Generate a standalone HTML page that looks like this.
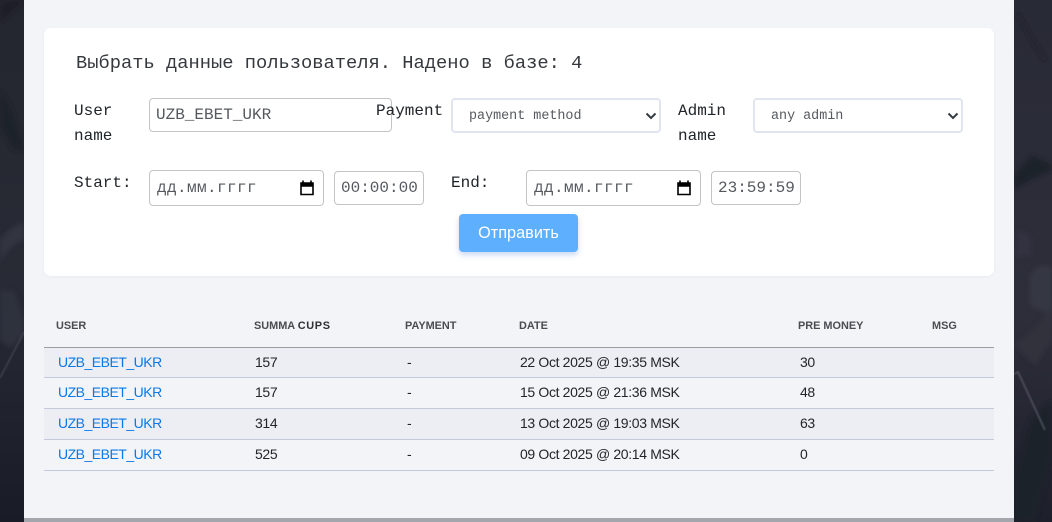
<!DOCTYPE html>
<html lang="ru"><head><meta charset="utf-8"><title>Users</title>
<style>
*{box-sizing:border-box}
html,body{margin:0;padding:0}
body{width:1052px;height:522px;overflow:hidden;position:relative;background:#23252f;font-family:"Liberation Sans",sans-serif}
.bg{position:absolute;left:0;top:0}
.main{position:absolute;left:24px;top:0;width:990px;height:522px;background:#f3f4f8}
.foot{position:absolute;left:24px;top:518px;width:990px;height:4px;background:#a3a6ad}
.card{position:absolute;left:44px;top:28px;width:950px;height:248px;background:#fff;border-radius:7px;box-shadow:0 1px 3px rgba(60,70,100,.05)}
.m{position:absolute;font-family:"Liberation Mono","Noto Sans CJK SC",monospace;white-space:nowrap}
.h{left:76px;top:52px;font-size:18.75px;line-height:22px;color:#35383d}
.l{font-size:16px;line-height:24.5px;color:#212529;letter-spacing:0}
.box{position:absolute;background:#fff;border:1px solid #c4c4c4;border-radius:4px;font-family:"Liberation Mono","Noto Sans CJK SC",monospace;color:#55595e;white-space:nowrap}
.sel{position:absolute;top:98px;height:35px;background:#fff;border:2px solid #e1e5ef;border-radius:4px;font-family:"Liberation Mono",monospace;font-size:13.4px;line-height:33px;color:#55595e;padding-left:16px}
.sel svg{position:absolute;right:2px;top:11px}
.cal{position:absolute;top:8px}
.btn{position:absolute;left:459px;top:214px;width:119px;height:38px;background:#5eb0ff;border:0;border-radius:4px;color:#fff;font-family:"Liberation Sans","Noto Sans CJK SC",sans-serif;font-size:16.3px;line-height:38px;text-align:center;padding:0;box-shadow:0 3px 6px rgba(80,130,220,.3)}
.th{position:absolute;top:320px;font-size:10.9px;line-height:13px;font-weight:bold;color:#4a4c52;white-space:nowrap}
.row{position:absolute;left:44px;width:950px;border-bottom:1px solid #c3c9da}
.td{position:absolute;font-size:14px;line-height:16px;color:#212529;white-space:nowrap;letter-spacing:-.35px}
.a{color:#0a78e6;left:58px;text-decoration:none;letter-spacing:-.5px}
.dt{letter-spacing:.4px}
</style></head><body>
<svg class="bg" width="1052" height="522" viewBox="0 0 1052 522" fill="none">
<defs><linearGradient id="g1" x1="0" y1="0" x2="0" y2="1"><stop offset="0" stop-color="#24262f"/><stop offset=".55" stop-color="#282a35"/><stop offset="1" stop-color="#191b27"/></linearGradient>
<linearGradient id="g2" x1="0" y1="0" x2="0" y2="1"><stop offset="0" stop-color="#282a35"/><stop offset=".6" stop-color="#2d2e3a"/><stop offset="1" stop-color="#1d1f2b"/></linearGradient>
<filter id="b" x="-10%" y="-10%" width="120%" height="120%"><feGaussianBlur stdDeviation="2.500"/></filter>
<filter id="b2" x="-10%" y="-10%" width="120%" height="120%"><feGaussianBlur stdDeviation=".7"/></filter></defs>
<rect x="0" y="0" width="24" height="522" fill="url(#g1)"/>
<rect x="1014" y="0" width="38" height="522" fill="url(#g2)"/>
<g filter="url(#b)">
<path d="M0 5L14 0L24 0L0 22Z" fill="#1a1b25"/>
<path d="M0 90L12 110L24 150L14 150L0 125Z" fill="#1e202b"/>
<path d="M0 240Q12 225 24 222L24 240Q10 245 0 262Z" fill="#32343f"/>
<path d="M0 290L15 292L24 320L24 335L10 348L0 340Z" fill="#2f313c"/>
<path d="M1014 175L1032 155L1052 165L1052 170L1030 180L1014 190Z" fill="#1f212b"/>
<path d="M1030 275Q1040 262 1052 268L1052 315L1030 305Z" fill="#363743"/>
<path d="M1018 230L1030 235L1032 255L1014 258Z" fill="#323340"/>
<path d="M1014 345Q1035 330 1052 308L1052 340L1035 365Z" fill="#30313d"/>
<path d="M1018 15Q1035 45 1045 60" stroke="#1d1f29" stroke-width="2"/>
<path d="M1030 420L1052 400L1052 460L1035 522L1014 522L1014 480Z" fill="#1e202b"/>
</g>
<g filter="url(#b2)">
<path d="M0 378L24 332" stroke="#474955" stroke-width="1.200"/>
<path d="M1014 374L1018 372L1045 430" stroke="#505260" stroke-width="1.500"/>
</g>
</svg>
<div class="main"></div>
<div class="foot"></div>
<div class="card"></div>
<div class="m h">Выбрать данные пользователя. Надено в базе: 4</div>

<div class="m l" style="left:74px;top:99px">User<br>name</div>
<div class="box" style="left:149px;top:98px;width:243px;height:34px;font-size:16px;line-height:33px;padding-left:6px">UZB_EBET_UKR</div>
<div class="m l" style="left:376px;top:99px">Payment</div>
<div class="sel" style="left:451px;width:210px">payment method<svg width="12" height="10" viewBox="0 0 12 10"><path d="M1.500 2.500L6 7L10.500 2.500" stroke="#343a40" stroke-width="2" fill="none"/></svg></div>
<div class="m l" style="left:678px;top:99px">Admin<br>name</div>
<div class="sel" style="left:753px;width:210px">any admin<svg width="12" height="10" viewBox="0 0 12 10"><path d="M1.500 2.500L6 7L10.500 2.500" stroke="#343a40" stroke-width="2" fill="none"/></svg></div>

<div class="m l" style="left:74px;top:171px">Start:</div>
<div class="box" style="left:149px;top:170px;width:175px;height:36px;font-size:16px;line-height:35px;padding-left:7px"><span class="dt">дд.мм.гггг</span><svg class="cal" style="left:150px" width="14" height="20" viewBox="0 0 14 20"><path d="M3 1.500V4M11 1.500V4M1 4H13V15.500H1ZM1 7H13" stroke="#000" stroke-width="1.600" fill="none"/><rect x="1" y="4" width="12" height="3" fill="#000"/></svg></div>
<div class="box" style="left:334px;top:171px;width:90px;height:34px;font-size:16px;line-height:33px;padding-left:6px">00:00:00</div>
<div class="m l" style="left:451px;top:171px">End:</div>
<div class="box" style="left:526px;top:170px;width:175px;height:36px;font-size:16px;line-height:35px;padding-left:7px"><span class="dt">дд.мм.гггг</span><svg class="cal" style="left:150px" width="14" height="20" viewBox="0 0 14 20"><path d="M3 1.500V4M11 1.500V4M1 4H13V15.500H1ZM1 7H13" stroke="#000" stroke-width="1.600" fill="none"/><rect x="1" y="4" width="12" height="3" fill="#000"/></svg></div>
<div class="box" style="left:711px;top:171px;width:90px;height:34px;font-size:16px;line-height:33px;padding-left:6px">23:59:59</div>
<button class="btn">Отправить</button>

<div class="th" style="left:56px">USER</div>
<div class="th" style="left:254px">SUMMA <span style="color:#2f3136;letter-spacing:.65px">CUPS</span></div>
<div class="th" style="left:405px">PAYMENT</div>
<div class="th" style="left:519px">DATE</div>
<div class="th" style="left:798px">PRE MONEY</div>
<div class="th" style="left:932px">MSG</div>

<div class="row" style="top:347px;height:31px;background:#eceef3;border-top:1px solid #9c9da3"></div>
<div class="row" style="top:378px;height:31px"></div>
<div class="row" style="top:409px;height:31px;background:#eceef3"></div>
<div class="row" style="top:440px;height:31px"></div>

<a class="td a" style="top:354px">UZB_EBET_UKR</a><div class="td" style="left:255px;top:354px">157</div><div class="td" style="left:407px;top:354px">-</div><div class="td" style="left:520px;top:354px">22 Oct 2025 @ 19:35 MSK</div><div class="td" style="left:800px;top:354px">30</div>
<a class="td a" style="top:384px">UZB_EBET_UKR</a><div class="td" style="left:255px;top:384px">157</div><div class="td" style="left:407px;top:384px">-</div><div class="td" style="left:520px;top:384px">15 Oct 2025 @ 21:36 MSK</div><div class="td" style="left:800px;top:384px">48</div>
<a class="td a" style="top:415px">UZB_EBET_UKR</a><div class="td" style="left:255px;top:415px">314</div><div class="td" style="left:407px;top:415px">-</div><div class="td" style="left:520px;top:415px">13 Oct 2025 @ 19:03 MSK</div><div class="td" style="left:800px;top:415px">63</div>
<a class="td a" style="top:446px">UZB_EBET_UKR</a><div class="td" style="left:255px;top:446px">525</div><div class="td" style="left:407px;top:446px">-</div><div class="td" style="left:520px;top:446px">09 Oct 2025 @ 20:14 MSK</div><div class="td" style="left:800px;top:446px">0</div>
</body></html>
